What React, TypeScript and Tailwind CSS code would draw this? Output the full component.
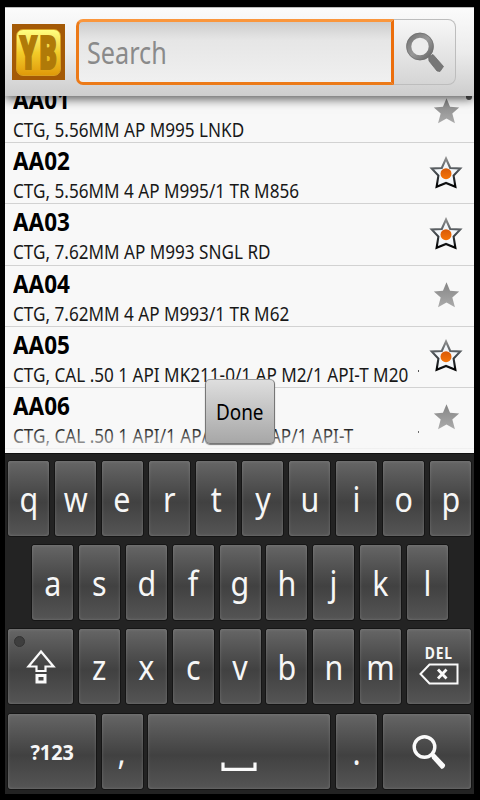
import React from "react";
import clsx from "clsx";

interface Item {
  code: string;
  name: string;
  starred: boolean;
  clipped?: boolean;
}

const items: Item[] = [
  { code: "AA01", name: "CTG, 5.56MM AP M995 LNKD", starred: false },
  { code: "AA02", name: "CTG, 5.56MM 4 AP M995/1 TR M856", starred: true },
  { code: "AA03", name: "CTG, 7.62MM AP M993 SNGL RD", starred: true },
  { code: "AA04", name: "CTG, 7.62MM 4 AP M993/1 TR M62", starred: false },
  { code: "AA05", name: "CTG, CAL .50 1 API MK211-0/1 AP M2/1 API-T M20", starred: true, clipped: true },
  { code: "AA06", name: "CTG, CAL .50 1 API/1 AP/1 API/1 AP/1 API-T", starred: false, clipped: true },
];

const STAR = "M16 1.5 L20.2 11.6 L31 12.4 L22.9 19.7 L26 31 L16 25.4 L6 31 L9.1 19.7 L1 12.4 L11.8 11.6 Z";

function Star({ on }: { on: boolean }) {
  if (!on) {
    return (
      <svg className="h-[27px] w-[27px]" viewBox="0 0 32 32">
        <defs>
          <linearGradient id="starOff" x1="0" y1="0" x2="0" y2="1">
            <stop offset="0" stopColor="#858585" />
            <stop offset="1" stopColor="#ababab" />
          </linearGradient>
        </defs>
        <path d={STAR} fill="url(#starOff)" />
      </svg>
    );
  }
  return (
    <svg className="h-[34px] w-[34px]" viewBox="-1 -1 34 34">
      <defs>
        <linearGradient id="starOn" x1="0" y1="0" x2="0" y2="1">
          <stop offset="0" stopColor="#8d8d8d" />
          <stop offset="0.45" stopColor="#4c5257" />
          <stop offset="1" stopColor="#000" />
        </linearGradient>
        <linearGradient id="starDot" x1="0" y1="0" x2="0" y2="1">
          <stop offset="0" stopColor="#d85a08" />
          <stop offset="1" stopColor="#f57408" />
        </linearGradient>
      </defs>
      <path d="M16 2.5 L20.2 12 L30.3 12.5 L23.6 19.6 L25.4 30.8 L16 27 L6.6 30.8 L8.4 19.6 L1.7 12.5 L11.8 12 Z" fill="#f4f7fa" stroke="url(#starOn)" strokeWidth="2.1" />
      <circle cx="16" cy="17.7" r="5.5" fill="url(#starDot)" />
    </svg>
  );
}

function Logo() {
  return (
    <div className="flex h-14 w-[53px] items-center justify-center bg-[#a45a06]">
      <div className="flex h-[47px] w-[45px] items-center justify-center rounded-[7px] border border-[#d8a020] bg-linear-to-b from-[#ffff80] via-[#f2cc28] to-[#e09a08]">
        <span className="inline-block scale-x-[0.58] pb-0.5 pl-[3px] font-['Open_Sans','Noto_Sans',sans-serif] text-[46px] leading-[45px] font-extrabold tracking-[3px] text-[#b07a08] [-webkit-text-stroke:2px_#b07a08]">
          YB
        </span>
      </div>
    </div>
  );
}

function SearchBar() {
  return (
    <div className="relative z-10 flex h-[89px] shrink-0 items-center border-t border-[#bbb] bg-linear-to-b from-[#fbfbfb] via-[#ececec] to-[#cdcdcd] pl-[7px] shadow-[0_3px_10px_rgba(0,0,0,0.65)]">
      <Logo />
      <div className="ml-[11px] flex h-[66px] w-[318px] items-center rounded-l-[7px] border-[3px] border-[#ec7a18] border-t-[#fa963c] border-r-[#ec6e0c] bg-linear-to-b from-[#cdcdcd] via-[#e6e6e6] via-30% to-[#f0f0f0] pt-0.5 pl-2">
        <span className="inline-block origin-left scale-x-[0.84] text-[30px] leading-9 text-[#8a8a8a]">Search</span>
      </div>
      <div className="flex h-[66px] w-[62px] items-center rounded-r-lg border border-l-0 border-[#bdbdbd] bg-linear-to-b from-[#f7f7f7] to-[#d5d5d5] pl-[11px]">
        <svg className="h-[42px] w-10" viewBox="0 0 40 42">
          <defs>
            <linearGradient id="glass" x1="0" y1="0" x2="1" y2="1">
              <stop offset="0" stopColor="#747474" />
              <stop offset="0.5" stopColor="#999" />
              <stop offset="1" stopColor="#686868" />
            </linearGradient>
          </defs>
          <path d="M23.5 25.5 L28 23.5 L38.5 35.5 L35 40.5 L32 40 L24 30 Z" fill="#777" stroke="#666" strokeWidth="0.7" />
          <circle cx="15" cy="15.5" r="11.2" fill="#ececec" stroke="url(#glass)" strokeWidth="5" />
          <circle cx="15" cy="15.5" r="13.4" fill="none" stroke="#707070" strokeWidth="0.7" />
        </svg>
      </div>
    </div>
  );
}

function ListRow({ item }: { item: Item }) {
  return (
    <div className="relative flex h-[61.25px] shrink-0 border-b border-[#d2d2d2] pl-2">
      <div className="flex flex-1 flex-col pt-px whitespace-nowrap text-black">
        <span className="h-8 origin-left scale-x-[0.9] text-[25px] leading-8 font-bold">{item.code}</span>
        <span className="mt-[3px] h-6 w-max origin-left scale-x-[0.878] text-[19.5px] leading-6 text-[#181818]">{item.name}</span>
      </div>
      {item.clipped && <div className="absolute top-[43px] right-[55px] h-0.5 w-px bg-[#555]" />}
      <div className="absolute top-0 right-[3px] flex h-[57px] w-[50px] items-center justify-center">
        <Star on={item.starred} />
      </div>
    </div>
  );
}

interface KeyProps {
  width?: string;
  children: React.ReactNode;
}

function Key({ width = "w-[41px]", children }: KeyProps) {
  return (
    <div
      className={clsx(
        "relative flex h-[75px] shrink-0 items-center justify-center rounded-[3px] bg-linear-to-b from-[#666] via-[#414141] via-55% to-[#555] text-[35px] leading-[75px] text-[#f6f6f6] shadow-[0_0_0_1px_#151515,inset_0_1px_0_#6e6e6e,inset_0_0_3px_rgba(255,255,255,0.22)]",
        width
      )}
    >
      {children}
    </div>
  );
}

function Letter({ char }: { char: string }) {
  return (
    <Key>
      <span className="inline-block scale-x-[0.87]">{char}</span>
    </Key>
  );
}

function Keyboard() {
  return (
    <div className="flex flex-1 flex-col gap-[9.2px] border-t border-[#111] bg-[#232323] pt-[7px] pl-[3px]">
      <div className="flex gap-[5.9px]">
        {"qwertyuiop".split("").map((c) => <Letter key={c} char={c} />)}
      </div>
      <div className="flex gap-[5.9px] pl-6">
        {"asdfghjkl".split("").map((c) => <Letter key={c} char={c} />)}
      </div>
      <div className="flex gap-[5.9px]">
        <Key width="w-[65px]">
          <div className="absolute top-[7px] left-[6px] h-[11px] w-[11px] rounded-full border border-[#333] bg-[#3e3e3e]" />
          <svg className="h-[36px] w-[30px]" viewBox="0 0 30 36" fill="none" stroke="#fafafa" strokeWidth="2.2">
            <path d="M15 2.5 L27.5 17.5 H19.5 V22 H10.5 V17.5 H2.5 Z" />
            <path d="M11 26.5 H19 V33 H11 Z" strokeWidth="3" />
          </svg>
        </Key>
        {"zxcvbnm".split("").map((c) => <Letter key={c} char={c} />)}
        <Key width="w-[64px]">
          <div className="mb-1 flex flex-col items-center">
            <span className="inline-block h-[17px] scale-x-[0.84] text-[16.5px] leading-[16px] font-bold tracking-[1px]">DEL</span>
            <svg className="mt-px h-[22px] w-10" viewBox="0 0 40 22" fill="none" stroke="#fafafa">
              <path d="M1.5 11 L10.5 1.5 H38.5 V20.5 H10.5 Z" strokeWidth="2" />
              <path d="M19 6.5 L27.5 15.5 M27.5 6.5 L19 15.5" strokeWidth="2.8" />
            </svg>
          </div>
        </Key>
      </div>
      <div className="flex gap-[5.7px]">
        <Key width="w-[88px]">
          <span className="inline-block scale-x-[0.9] text-[22px] font-bold">?123</span>
        </Key>
        <Letter char="," />
        <Key width="w-[182px]">
          <svg className="mt-[31px] h-[10px] w-[36px]" viewBox="0 0 36 10" fill="none" stroke="#fafafa" strokeWidth="3.2">
            <path d="M2 0.5 V7.4 H34 V0.5" />
          </svg>
        </Key>
        <Letter char="." />
        <Key width="w-[88px]">
          <svg className="mt-[2px] ml-[4px] h-[34px] w-[34px]" viewBox="0 0 34 34">
            <path d="M19 20.5 L22.5 18.5 L33 29.5 Q33.5 33 29.5 34 L20 23.5 Z" fill="#fafafa" />
            <circle cx="12.5" cy="12" r="10.3" fill="none" stroke="#fafafa" strokeWidth="3.4" />
          </svg>
        </Key>
      </div>
    </div>
  );
}

export default function App() {
  return (
    <div className="h-[800px] w-[480px] overflow-hidden bg-black pt-[7px] pl-[5px] font-['Noto_Sans','Open_Sans',sans-serif]">
      <div className="relative flex h-[787px] w-[469px] flex-col overflow-hidden bg-[#f8f8f8]">
        <SearchBar />
        <div className="relative h-[357px] shrink-0 overflow-hidden">
          <div className="-mt-[14.2px] flex flex-col">
            {items.map((item) => <ListRow key={item.code} item={item} />)}
          </div>
          {/* end of the scroll thumb */}
          <div className="absolute top-0 right-[2px] h-1 w-[6px] rounded-b-full bg-[#555]" />
          <div className="absolute inset-x-0 bottom-0 h-[26px] bg-linear-to-t from-[#f8f8f8] via-[#f8f8f8]/40 to-transparent" />
        </div>
        <Keyboard />
        <div className="absolute top-[372px] left-[200px] flex h-[65px] w-[70px] items-center justify-center rounded-[5px] border border-[#777] border-t-[#999] bg-linear-to-b from-[#dedede] to-[#a7a7a7] shadow-[0_1px_1px_rgba(0,0,0,0.5)]">
          <span className="inline-block scale-x-[0.86] text-[22px] text-black">Done</span>
        </div>
      </div>
    </div>
  );
}
